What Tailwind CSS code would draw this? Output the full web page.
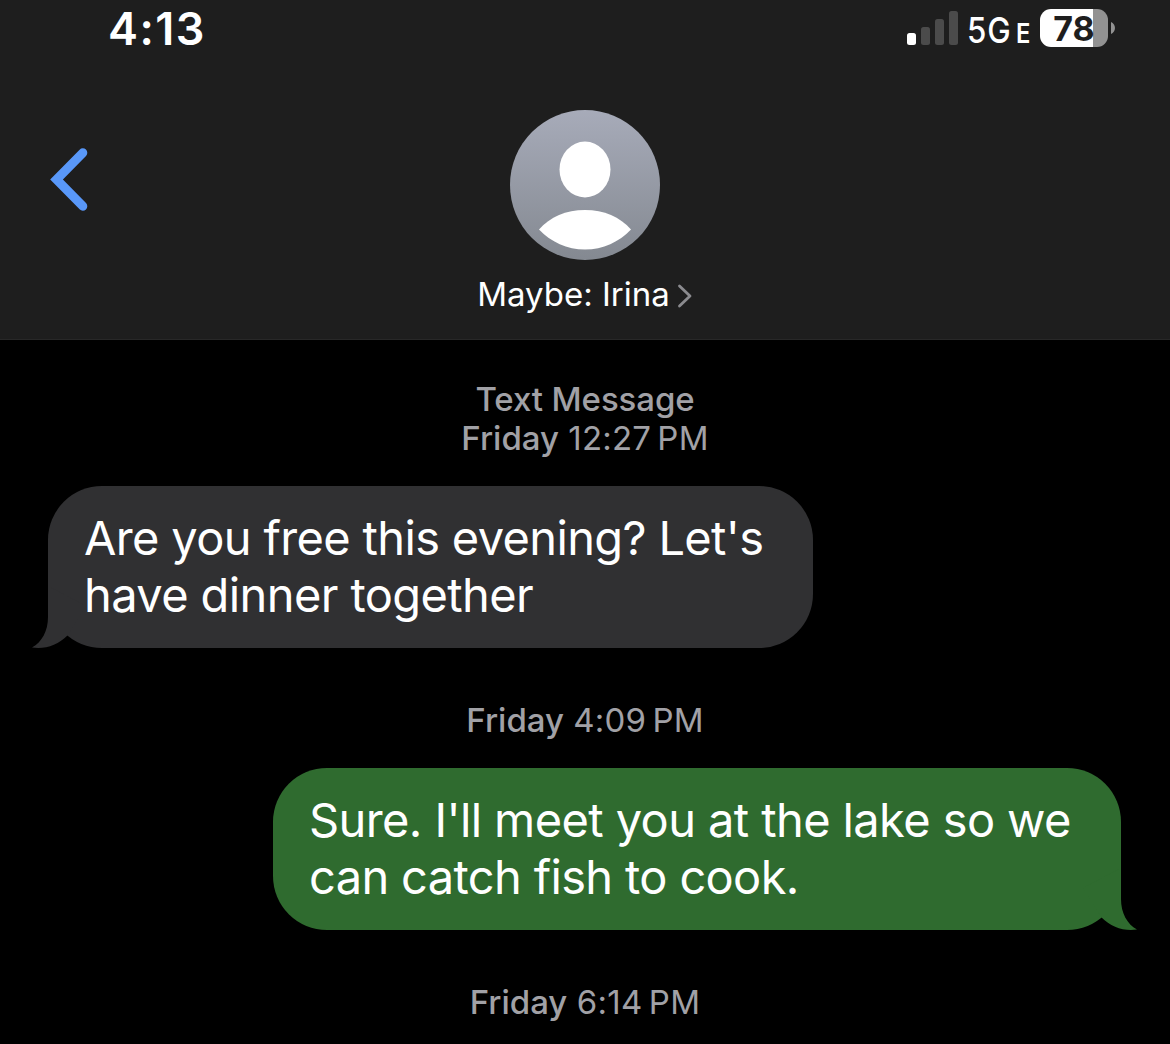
<!DOCTYPE html>
<html lang="en">
<head>
  <meta charset="UTF-8" />
  <meta name="viewport" content="width=device-width, initial-scale=1.0"/>
  <title>Messages - Irina</title>
  <script src="https://cdn.jsdelivr.net/npm/@tailwindcss/browser@4"></script>
</head>
<body class="bg-black text-white font-['Inter',sans-serif] h-[1044px] overflow-hidden">
  <header class="h-[340px] bg-[#1e1e1e] border-b border-[#282828]">
    <!-- Status bar -->
    <div class="flex justify-between h-[60px] pl-[108px] pr-[55px]">
      <span class="text-[45px] leading-[57px] font-semibold tracking-[1.5px]">4:13</span>
      <div class="flex">
        <svg class="w-[52px] h-[60px]" viewBox="0 0 52 60">
          <rect x="0" y="33" width="9" height="12" rx="2.5" fill="#fff"/>
          <rect x="14" y="27" width="9" height="18" rx="2.5" fill="#4b4b4b"/>
          <rect x="28" y="19" width="9" height="26" rx="2.5" fill="#4b4b4b"/>
          <rect x="42" y="11" width="9" height="34" rx="2.5" fill="#4b4b4b"/>
        </svg>
        <span class="ml-[8px] w-[49px] text-[36px] leading-[60px] font-medium tracking-[1px] origin-left scale-x-[0.87]">5G</span>
        <span class="w-[24px] text-[27px] leading-[67px] font-semibold origin-left scale-x-[0.88]">E</span>
        <div class="flex items-center h-[56px]">
          <div class="w-[68px] h-[38px] rounded-[11px] bg-linear-to-r from-white from-[78%] to-[#929292] to-[78%] text-center text-[#1e1e1e] text-[34px] leading-[39px] font-bold">78</div>
          <svg class="ml-[3px] w-[4px] h-[12px]" viewBox="0 0 4 12"><path d="M0 0c2.500 1 4 3.500 4 6s-1.500 5-4 6z" fill="#929292"/></svg>
        </div>
      </div>
    </div>

    <!-- Contact -->
    <div class="grid grid-cols-3 pt-[50px]">
      <svg class="ml-[48px] mt-[36px] w-[42px] h-[68px]" viewBox="0 0 42 68" fill="none" stroke="#5998f9" stroke-width="9" stroke-linecap="round" stroke-linejoin="miter"><path d="M34.800 6.800L8.500 33.500L34.800 60.200"/></svg>
      <div class="flex flex-col items-center">
        <svg class="w-[150px] h-[150px]" viewBox="0 0 150 150">
          <defs>
            <linearGradient id="avatar" x1="0" y1="0" x2="0" y2="1">
              <stop offset="0" stop-color="#a7abb9"/>
              <stop offset="1" stop-color="#848991"/>
            </linearGradient>
          </defs>
          <circle cx="75" cy="75" r="75" fill="url(#avatar)"/>
          <ellipse cx="75" cy="59.500" rx="25.500" ry="28" fill="#fff"/>
          <path d="M29 119.500C40 107 56 100 75 100s35 7 46 19.500C109 132 93 139.500 75 139.500S41 132 29 119.500z" fill="#fff"/>
        </svg>
        <div class="flex items-center mt-[14px]">
          <span class="text-[33px] leading-[40px] whitespace-nowrap">Maybe: Irina</span>
          <svg class="ml-[7px] mt-[4px] w-[16px] h-[24px]" viewBox="0 0 16 24" fill="none" stroke="#8b8b8f" stroke-width="2.800" stroke-linecap="round" stroke-linejoin="round"><path d="M2.500 2L13 12L2.500 22"/></svg>
        </div>
      </div>
    </div>
  </header>

  <main>
    <div class="pt-[40px] h-[146px] text-center text-[33px] leading-[39px] text-[#a1a1a6]">
      <p class="font-medium tracking-[-0.1px]">Text Message</p>
      <p><span class="font-medium">Friday</span> <span class="tracking-[0.2px]">12:27&#8201;PM</span></p>
    </div>

    <!-- Received -->
    <div class="relative ml-[48px] w-[765px] h-[162px] rounded-[54px] bg-[#303032] pl-[36px] pt-[23px] text-[47px] leading-[57px] whitespace-nowrap">
      <p class="tracking-[-0.65px]">Are you free this evening? Let's</p>
      <p class="tracking-[-0.6px]">have dinner together</p>
      <svg class="absolute left-[-17px] bottom-0 w-[60px] h-[62px]" viewBox="0 0 60 62" fill="#303032"><path d="M17 0V31C17 45 11 56 1 61.500C14 63.500 27 59 36.500 49.500L55 20z"/></svg>
    </div>

    <div class="pt-[53px] h-[120px] text-center text-[33px] leading-[39px] text-[#a1a1a6]">
      <p><span class="font-medium">Friday</span> <span class="tracking-[0.2px]">4:09&#8201;PM</span></p>
    </div>

    <!-- Sent -->
    <div class="relative ml-[273px] w-[848px] h-[162px] rounded-[54px] bg-[#2f6b2f] pl-[36px] pt-[23px] text-[47px] leading-[57px] whitespace-nowrap">
      <p class="tracking-[-0.6px]">Sure. I'll meet you at the lake so we</p>
      <p class="tracking-[-0.65px]">can catch fish to cook.</p>
      <svg class="absolute right-[-17px] bottom-0 w-[60px] h-[62px]" viewBox="0 0 60 62" fill="#2f6b2f"><path d="M43 0V31C43 45 49 56 59 61.500C46 63.500 33 59 23.500 49.500L5 20z"/></svg>
    </div>

    <div class="pt-[53px] text-center text-[33px] leading-[39px] text-[#a1a1a6]">
      <p><span class="font-medium">Friday</span> <span class="tracking-[0.3px]">6:14&#8201;PM</span></p>
    </div>
  </main>
</body>
</html>
